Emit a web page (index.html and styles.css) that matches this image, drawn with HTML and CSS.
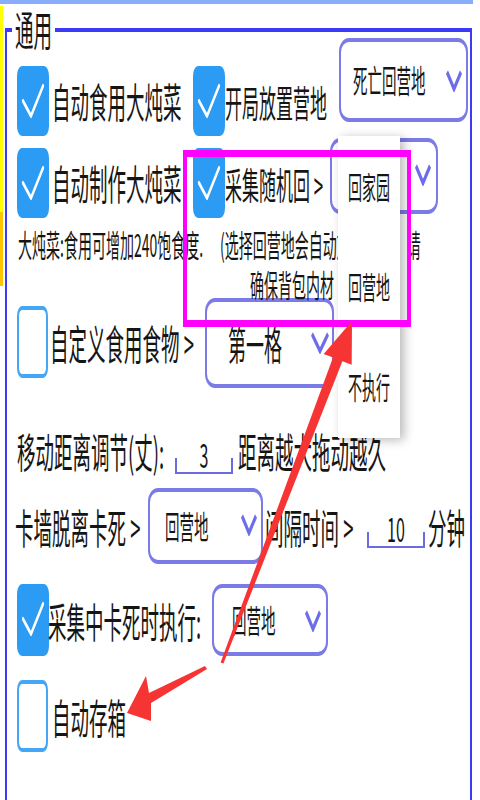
FILE: index.html
```html
<!DOCTYPE html>
<html lang="zh-CN">
<head>
<meta charset="utf-8">
<title>通用设置</title>
<link rel="stylesheet" href="styles.css">
</head>
<body>
<div class="stage">
  <div class="app">
    <div class="topline"></div>
    <div class="body">
      <div class="rail"><div class="rail-y"></div><div class="rail-o"></div></div>
      <fieldset class="group">
        <legend class="legend"><span class="lt">通用</span></legend>

        <div class="row r1">
          <div class="check c1">
            <span class="box on"><svg class="tick" viewBox="0 0 32 35.5" preserveAspectRatio="none"><polyline points="6,17.5 14,25 26,10"/></svg></span>
            <span class="lab ml3">自动食用大炖菜</span>
          </div>
          <div class="check c2a">
            <span class="box on"><svg class="tick" viewBox="0 0 32 35.5" preserveAspectRatio="none"><polyline points="6,17.5 14,25 26,10"/></svg></span>
            <span class="lab sm">开局放置营地</span>
          </div>
          <div class="sel d1">
            <span class="txt">死亡回营地</span>
            <svg class="chev" viewBox="0 0 18 11"><polyline points="2,1 9,9.5 16,1"/></svg>
          </div>
        </div>

        <div class="row r2">
          <div class="check c1">
            <span class="box on"><svg class="tick" viewBox="0 0 32 35.5" preserveAspectRatio="none"><polyline points="6,17.5 14,25 26,10"/></svg></span>
            <span class="lab ml3">自动制作大炖菜</span>
          </div>
          <div class="check c2b">
            <span class="box on"><svg class="tick" viewBox="0 0 32 35.5" preserveAspectRatio="none"><polyline points="6,17.5 14,25 26,10"/></svg></span>
            <span class="lab sm">采集随机回 &gt;</span>
          </div>
          <div class="sel d2">
            <span class="txt"></span>
            <svg class="chev" viewBox="0 0 18 11"><polyline points="2,1 9,9.5 16,1"/></svg>
          </div>
        </div>

        <div class="row notes">
          <div class="n1">大炖菜:食用可增加240饱食度.</div>
          <div class="n2">
            <div class="l1">(选择回营地会自动放置营地，请</div>
            <div class="l2">确保背包内材</div>
          </div>
        </div>

        <div class="row r4">
          <span class="box off"></span>
          <span class="lab w4">自定义食用食物 &gt;</span>
          <div class="sel d3">
            <span class="txt big">第一格</span>
            <svg class="chev wide" viewBox="0 0 20 11"><polyline points="2,1 10,9.5 18,1"/></svg>
          </div>
        </div>

        <div class="row r5">
          <span class="lab w5">移动距离调节(丈):</span>
          <span class="inp i1">3</span>
          <span class="lab ml5">距离越大拖动越久</span>
        </div>

        <div class="row r6">
          <span class="lab w6">卡墙脱离卡死 &gt;</span>
          <div class="sel d4">
            <span class="txt">回营地</span>
            <svg class="chev" viewBox="0 0 18 11"><polyline points="2,1 9,9.5 16,1"/></svg>
          </div>
          <span class="lab w6b">间隔时间 &gt;</span>
          <span class="inp i2">10</span>
          <span class="lab ml3">分钟</span>
        </div>

        <div class="row r7">
          <span class="box on"><svg class="tick" viewBox="0 0 32 35.5" preserveAspectRatio="none"><polyline points="6,17.5 14,25 26,10"/></svg></span>
          <span class="lab w7">采集中卡死时执行:</span>
          <div class="sel d5">
            <span class="txt">回营地</span>
            <svg class="chev" viewBox="0 0 18 11"><polyline points="2,1 9,9.5 16,1"/></svg>
          </div>
        </div>

        <div class="row r8">
          <span class="box off"></span>
          <span class="lab ml4">自动存箱</span>
        </div>
      </fieldset>
    </div>

    <div class="popup">
      <div class="item"><span class="it">回家园</span></div>
      <div class="item"><span class="it">回营地</span></div>
      <div class="item"><span class="it">不执行</span></div>
    </div>
  </div>

  <div class="marks">
    <div class="frame"></div>
    <svg class="arrows" viewBox="0 0 480 800">
      <polygon points="352,321 323.7,354 333,357.6 220.6,662.5 223.4,663.5 342.4,361.2 351.7,364.8"/>
      <polygon points="127,713 146,676 149,693 205,666 207,669 151,703 151,721"/>
    </svg>
  </div>
</div>
</body>
</html>
```

FILE: styles.css
```css
html, body {
  margin: 0;
  padding: 0;
  background: #ffffff;
}

.stage {
  position: relative;
  width: 480px;
  height: 800px;
  overflow: hidden;
  background: #ffffff;
  font-family: "Noto Sans CJK SC", "Noto Sans", sans-serif;
  color: #151515;
}

/* The app is rendered at half height and stretched vertically, as in the screenshot */
.app {
  position: relative;
  width: 480px;
  height: 400px;
  overflow: hidden;
  transform: scaleY(2);
  transform-origin: 0 0;
}

.topline {
  width: 473px;
  height: 1.5px;
  background: #88aefb;
}

.body {
  display: flex;
  align-items: flex-start;
}

.rail {
  width: 3px;
  margin-top: 1px;
  flex: none;
}
.rail-y { height: 103px; background: #ffff00; }
.rail-o { height: 37.5px; background: #ffc400; }

.group {
  box-sizing: border-box;
  width: 467px;
  height: 430px;
  margin: 3.75px 0 0 2px;
  padding: 0 2px 0 10px;
  border: 2px solid #3b3bf5;
  min-width: 0;
}

.legend {
  font-size: 18.5px;
  line-height: 18.5px;
  padding: 0 3px;
  margin-left: -5px;
}
.lt {
  display: inline-block;
  transform: scaleY(1.1);
}

.row {
  display: flex;
}

.check {
  display: flex;
  align-items: center;
  flex: none;
}

.box {
  display: block;
  box-sizing: border-box;
  flex: none;
  width: 32px;
  height: 35.5px;
  border-radius: 5px;
}
.box.on { background: #2b9bf3; }
.box.off {
  width: 31px;
  background: #ffffff;
  border: 2px solid #45a6f6;
}

.tick {
  display: block;
  width: 32px;
  height: 35.5px;
}
.tick polyline {
  fill: none;
  stroke: #ffffff;
  stroke-width: 2.2;
  stroke-linecap: round;
  stroke-linejoin: round;
}

/* text is a little taller than wide in the stretched screenshot */
.lab, .sel .txt, .n1, .n2, .it {
  transform: scaleY(1.1);
}

.lab {
  font-size: 18.5px;
  line-height: 1;
  white-space: nowrap;
  flex: none;
}
.lab.sm { font-size: 17px; }

.ml3 { margin-left: 3px; }
.ml4 { margin-left: 4px; }
.ml5 { margin-left: 5px; }

.sel {
  display: flex;
  align-items: center;
  justify-content: space-between;
  box-sizing: border-box;
  flex: none;
  border: 2px solid #7b7be8;
  border-radius: 10px / 7px;
  background: #ffffff;
}
.sel .txt {
  font-size: 14.5px;
  line-height: 1;
  white-space: nowrap;
}
.sel .txt.big { font-size: 18px; }

.chev {
  display: block;
  width: 18px;
  height: 11px;
  flex: none;
}
.chev.wide { width: 20px; }
.chev polyline {
  fill: none;
  stroke: #6d6dea;
  stroke-width: 2.6;
  stroke-linejoin: miter;
}

.inp {
  display: block;
  box-sizing: border-box;
  flex: none;
  width: 58px;
  height: 16px;
  align-self: flex-end;
  font-size: 16px;
  line-height: 13px;
  text-align: center;
  border-bottom: 1.5px solid #6b6be0;
  background:
    linear-gradient(#6b6be0, #6b6be0) left bottom / 2px 7px no-repeat,
    linear-gradient(#6b6be0, #6b6be0) right bottom / 2px 7px no-repeat;
}

/* Row 1 and 2 */
.r1 { height: 49px; margin-top: -4.75px; }
.r2 { height: 40.5px; margin-top: 0.5px; }
.r1 .check, .r2 .check { align-self: flex-end; }
.r1 .sel, .r2 .sel { align-self: flex-start; }
.c1 { width: 176px; }
.c2a { width: 146px; }
.c2b { width: 137px; }

.d1 { width: 129px; height: 42px; padding: 0 3px 0 12px; }
.d2 { width: 108px; height: 38px; padding: 0 4px 0 12px; }

/* Notes */
.notes {
  margin-top: 5px;
  font-size: 14px;
  line-height: 18px;
  white-space: nowrap;
}
.n1 { width: 202px; margin-left: 1px; flex: none; }
.n2 { flex: none; }
.l2 { padding-left: 30px; }

/* Row 4 */
.r4 { height: 45px; margin-top: -1.5px; align-items: center; }
.r4 .lab { margin-left: 2px; }
.w4 { width: 155px; }
.d3 { width: 129px; height: 45px; padding: 0 2px 0 21px; }

/* Row 5 */
.r5 { height: 24px; margin-top: 20px; align-items: center; }
.w5 { width: 158px; }
.r5 .inp { margin-bottom: 1px; }

/* Row 6 */
.r6 { height: 37.5px; margin-top: 6.5px; align-items: center; }
.w6 { width: 133px; margin-left: -2px; }
.d4 { width: 115px; height: 37.5px; padding: 0 3px 0 15px; }
.w6b { width: 102px; margin-left: 2px; }
.r6 .inp { margin-bottom: 7.5px; }

/* Row 7 */
.r7 { height: 38px; margin-top: 9.5px; align-items: center; }
.w7 { width: 164px; margin-left: -1px; }
.d5 { width: 116px; height: 36.5px; padding: 0 4px 0 18px; }

/* Row 8 */
.r8 { height: 35.5px; margin-top: 11px; align-items: center; }

/* Open dropdown menu */
.popup {
  position: absolute;
  left: 338px;
  top: 67.5px;
  width: 62px;
  height: 151px;
  display: flex;
  flex-direction: column;
  background: #ffffff;
  box-shadow: 4px 1px 7px rgba(0, 0, 0, 0.28);
}
.popup .item {
  flex: 1;
  display: flex;
  align-items: center;
  padding-left: 10px;
  font-size: 14px;
  line-height: 1;
}
.it { display: block; }

/* Annotation overlay */
.marks {
  position: absolute;
  left: 0;
  top: 0;
  width: 480px;
  height: 800px;
  pointer-events: none;
}
.frame {
  position: absolute;
  left: 183px;
  top: 150px;
  width: 228px;
  height: 177px;
  box-sizing: border-box;
  border-style: solid;
  border-color: #ff00ff;
  border-width: 7px 4px;
}
.arrows {
  position: absolute;
  left: 0;
  top: 0;
  width: 480px;
  height: 800px;
}
.arrows polygon {
  fill: #f63434;
}
```
